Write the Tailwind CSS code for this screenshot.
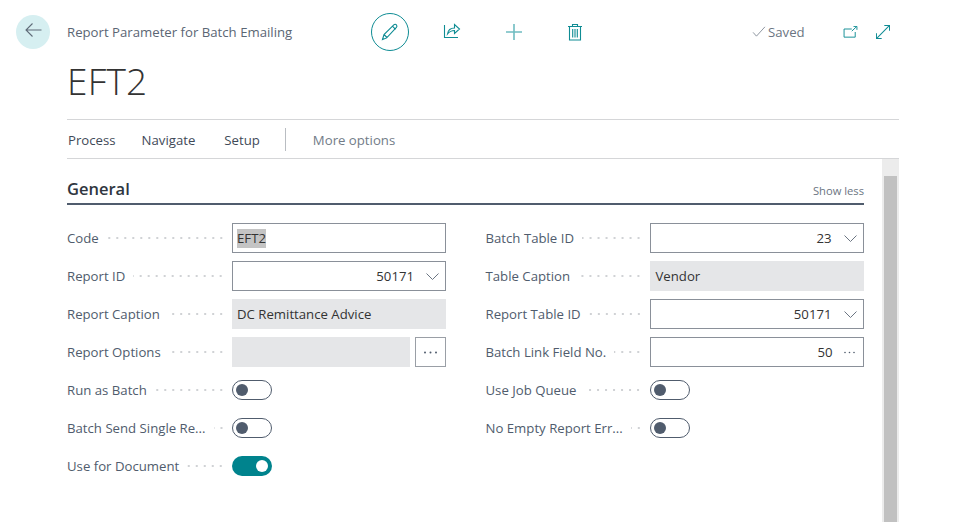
<!DOCTYPE html>
<html lang="en">
<head>
  <meta charset="UTF-8" />
  <meta name="viewport" content="width=device-width, initial-scale=1.0" />
  <title>EFT2</title>
  <script src="https://cdn.jsdelivr.net/npm/@tailwindcss/browser@4"></script>
</head>
<body class="bg-white font-['Open_Sans',sans-serif] text-[13.2px] text-[#505c6d] overflow-hidden">

<div class="relative w-[964px] h-[522px] overflow-hidden">

  <!-- Header -->
  <div class="flex pl-[16px] pt-[15px] h-[119px]">
    <button class="w-[34px] h-[34px] rounded-full bg-[#d6eff1] flex items-center justify-center">
      <svg class="-mt-[4px]" width="17" height="14" viewBox="0 0 17 14" fill="none" stroke="#5f6b78" stroke-width="1.1"><path d="M16.500 7H1M7.500.5 1 7l6.500 6.500"/></svg>
    </button>
    <div class="ml-[17px] w-[832px]">
      <div class="flex items-center h-[34px]">
        <div class="w-[304px] pt-[2px] text-[#5b6674]">Report Parameter for Batch Emailing</div>
        <div class="w-[38px] h-[38px] rounded-full border border-[#0f8c94] flex items-center justify-center">
          <svg width="18" height="18" viewBox="0 0 18 18" fill="none" stroke="#0f8c94" stroke-width="1.1"><path d="M1.5 16.5 3 11.5 12.8 1.8c.8-.8 1.9-.8 2.6 0s.7 1.8 0 2.5L5.7 14.9zM3 11.5l3 3M11.4 3.2l3.2 3.2"/></svg>
        </div>
        <svg class="ml-[34px] -mt-[4px]" width="18" height="18" viewBox="0 0 18 18" fill="none" stroke="#0f8c94" stroke-width="1.1"><path d="M1.5 4v12.5h13.5M4.5 13c.6-4 3.600-6 7-6V3.500L16.500 8l-5 4.500V9.500c-3 0-5 1-7 3.500z"/></svg>
        <svg class="ml-[44px]" width="18" height="18" viewBox="0 0 18 18" fill="none" stroke="#6fbcc1" stroke-width="1.6"><path d="M9 1v16M1 9h16"/></svg>
        <svg class="ml-[44px]" width="16" height="18" viewBox="0 0 16 18" fill="none" stroke="#0f8c94" stroke-width="1.1"><path d="M1 3.500h14M5.500 3.500V1.500h5v2M2.500 3.500v13.500h11V3.500M5.700 6v8.500M8 6v8.500M10.300 6v8.500"/></svg>
        <svg class="ml-[169px] -mt-[1px]" width="14" height="11" viewBox="0 0 15 13" fill="none" stroke="#7a8490" stroke-width="1"><path d="M.5 7.500 4.500 12 14.500 1"/></svg>
        <span class="ml-[2px] pt-[2px] text-[#6b7582]">Saved</span>
        <svg class="ml-[38px] -mt-[1px]" width="15" height="12" viewBox="0 0 16 14" fill="none" stroke="#0f8c94" stroke-width="1.1"><path d="M9.500 3.500H.5v9.500h13V7M9.500 6 15 .8M11.500.5H15.500V4.500"/></svg>
        <svg class="ml-[18px]" width="14" height="14" viewBox="0 0 16 16" fill="none" stroke="#0f8c94" stroke-width="1.2"><path d="M.8 15.200 15.200.8M9.500.5h6v6M.5 9.500v6h6"/></svg>
      </div>
      <h1 class="text-[37px] leading-[48px] font-light text-[#333] mt-[8px] tracking-[.2px]">EFT2</h1>
    </div>
  </div>

  <!-- Action bar -->
  <div class="mx-[67px] w-[832px] h-[40px] pt-[4px] border-y border-[#d5d6d8] flex items-center text-[#3f4a58]">
    <span class="ml-[1px]">Process</span>
    <span class="ml-[26px]">Navigate</span>
    <span class="ml-[29px]">Setup</span>
    <span class="ml-[25px] -mt-[4px] w-px h-[23px] bg-[#b9bdc2]"></span>
    <span class="ml-[27px] text-[#727c88]">More options</span>
  </div>

  <!-- Section -->
  <div class="ml-[67px] w-[797px]">
    <div class="flex items-end justify-between h-[39px] pb-[5px] border-b-2 border-[#505c6d] box-content">
      <span class="text-[16.500px] font-semibold text-[#2f3640] leading-[22px] -mb-[2px]">General</span>
      <span class="text-[11.200px] text-[#6b7582] -mb-[2px]">Show less</span>
    </div>

    <div class="grid grid-cols-2 gap-x-[40px] mt-[18px]">
      <!-- left column -->
      <div class="flex flex-col gap-[8px] w-[379px]">
        <div class="flex items-center h-[30px]">
          <span class="shrink-0 pt-[2px]">Code</span>
          <span class="flex-1 ml-[8px] mr-[7px] h-[4px] bg-[radial-gradient(circle,#d0d2d5_1px,transparent_1px)] bg-[length:8px_4px] bg-right"></span>
          <div class="w-[214px] h-[30px] border border-[#8a9099] flex items-center px-[4px] text-[#333]"><span class="bg-[#c4c4c4] leading-[19px]">EFT2</span></div>
        </div>
        <div class="flex items-center h-[30px]">
          <span class="shrink-0 pt-[2px]">Report ID</span>
          <span class="flex-1 ml-[8px] mr-[7px] h-[4px] bg-[radial-gradient(circle,#d0d2d5_1px,transparent_1px)] bg-[length:8px_4px] bg-right"></span>
          <div class="w-[214px] h-[30px] border border-[#8a9099] flex items-center justify-end text-[#333]">
            <span class="pt-[2px]">50171</span>
            <svg class="ml-[12px] mr-[6px]" width="13" height="7" viewBox="0 0 13 7" fill="none" stroke="#6b7582"><path d="M.5.500 6.500 6.500 12.500.5"/></svg>
          </div>
        </div>
        <div class="flex items-center h-[30px]">
          <span class="shrink-0 pt-[2px]">Report Caption</span>
          <span class="flex-1 ml-[8px] mr-[7px] h-[4px] bg-[radial-gradient(circle,#d0d2d5_1px,transparent_1px)] bg-[length:8px_4px] bg-right"></span>
          <div class="w-[214px] h-[30px] pt-[2px] bg-[#e5e6e8] flex items-center px-[5px] text-[#333]">DC Remittance Advice</div>
        </div>
        <div class="flex items-center h-[30px]">
          <span class="shrink-0 pt-[2px]">Report Options</span>
          <span class="flex-1 ml-[8px] mr-[7px] h-[4px] bg-[radial-gradient(circle,#d0d2d5_1px,transparent_1px)] bg-[length:8px_4px] bg-right"></span>
          <div class="w-[178px] h-[30px] bg-[#e5e6e8]"></div>
          <div class="ml-[5px] w-[31px] h-[30px] border border-[#9a9fa6] flex items-center justify-center">
            <svg width="15" height="3" viewBox="0 0 15 3" fill="#505c6d"><circle cx="2" cy="1.500" r="1"/><circle cx="7.500" cy="1.500" r="1"/><circle cx="13" cy="1.500" r="1"/></svg>
          </div>
        </div>
        <div class="flex items-center h-[30px]">
          <span class="shrink-0 pt-[2px]">Run as Batch</span>
          <span class="flex-1 ml-[8px] mr-[7px] h-[4px] bg-[radial-gradient(circle,#d0d2d5_1px,transparent_1px)] bg-[length:8px_4px] bg-right"></span>
          <div class="w-[214px]"><div class="w-[40px] h-[20px] rounded-full border border-[#505c6d] flex items-center pl-[3px]"><span class="w-[12px] h-[12px] rounded-full bg-[#505c6d]"></span></div></div>
        </div>
        <div class="flex items-center h-[30px]">
          <span class="shrink-0 pt-[2px]">Batch Send Single Re...</span>
          <span class="flex-1 ml-[8px] mr-[7px] h-[4px] bg-[radial-gradient(circle,#d0d2d5_1px,transparent_1px)] bg-[length:8px_4px] bg-right"></span>
          <div class="w-[214px]"><div class="w-[40px] h-[20px] rounded-full border border-[#505c6d] flex items-center pl-[3px]"><span class="w-[12px] h-[12px] rounded-full bg-[#505c6d]"></span></div></div>
        </div>
        <div class="flex items-center h-[30px]">
          <span class="shrink-0 pt-[2px]">Use for Document</span>
          <span class="flex-1 ml-[8px] mr-[7px] h-[4px] bg-[radial-gradient(circle,#d0d2d5_1px,transparent_1px)] bg-[length:8px_4px] bg-right"></span>
          <div class="w-[214px]"><div class="w-[40px] h-[20px] rounded-full bg-[#00838d] flex items-center justify-end pr-[4px]"><span class="w-[12px] h-[12px] rounded-full bg-white"></span></div></div>
        </div>
      </div>

      <!-- right column -->
      <div class="flex flex-col gap-[8px] w-[378px]">
        <div class="flex items-center h-[30px]">
          <span class="shrink-0 pt-[2px]">Batch Table ID</span>
          <span class="flex-1 ml-[8px] mr-[7px] h-[4px] bg-[radial-gradient(circle,#d0d2d5_1px,transparent_1px)] bg-[length:8px_4px] bg-right"></span>
          <div class="w-[214px] h-[30px] border border-[#8a9099] flex items-center justify-end text-[#333]">
            <span class="pt-[2px]">23</span>
            <svg class="ml-[12px] mr-[6px]" width="13" height="7" viewBox="0 0 13 7" fill="none" stroke="#6b7582"><path d="M.5.500 6.500 6.500 12.500.5"/></svg>
          </div>
        </div>
        <div class="flex items-center h-[30px]">
          <span class="shrink-0 pt-[2px]">Table Caption</span>
          <span class="flex-1 ml-[8px] mr-[7px] h-[4px] bg-[radial-gradient(circle,#d0d2d5_1px,transparent_1px)] bg-[length:8px_4px] bg-right"></span>
          <div class="w-[214px] h-[30px] pt-[2px] bg-[#e5e6e8] flex items-center px-[5px] text-[#333]"><span class="ml-[1px]">Vendor</span></div>
        </div>
        <div class="flex items-center h-[30px]">
          <span class="shrink-0 pt-[2px]">Report Table ID</span>
          <span class="flex-1 ml-[8px] mr-[7px] h-[4px] bg-[radial-gradient(circle,#d0d2d5_1px,transparent_1px)] bg-[length:8px_4px] bg-right"></span>
          <div class="w-[214px] h-[30px] border border-[#8a9099] flex items-center justify-end text-[#333]">
            <span class="pt-[2px]">50171</span>
            <svg class="ml-[12px] mr-[6px]" width="13" height="7" viewBox="0 0 13 7" fill="none" stroke="#6b7582"><path d="M.5.500 6.500 6.500 12.500.5"/></svg>
          </div>
        </div>
        <div class="flex items-center h-[30px]">
          <span class="shrink-0 pt-[2px]">Batch Link Field No.</span>
          <span class="flex-1 ml-[8px] mr-[7px] h-[4px] bg-[radial-gradient(circle,#d0d2d5_1px,transparent_1px)] bg-[length:8px_4px] bg-right"></span>
          <div class="w-[214px] h-[30px] border border-[#8a9099] flex items-center justify-end text-[#333]">
            <span class="pt-[2px]">50</span>
            <svg class="ml-[10px] mr-[7px]" width="13" height="3" viewBox="0 0 13 3" fill="#505c6d"><circle cx="2" cy="1.500" r=".8"/><circle cx="6.500" cy="1.500" r=".8"/><circle cx="11" cy="1.500" r=".8"/></svg>
          </div>
        </div>
        <div class="flex items-center h-[30px]">
          <span class="shrink-0 pt-[2px]">Use Job Queue</span>
          <span class="flex-1 ml-[8px] mr-[7px] h-[4px] bg-[radial-gradient(circle,#d0d2d5_1px,transparent_1px)] bg-[length:8px_4px] bg-right"></span>
          <div class="w-[214px]"><div class="w-[40px] h-[20px] rounded-full border border-[#505c6d] flex items-center pl-[3px]"><span class="w-[12px] h-[12px] rounded-full bg-[#505c6d]"></span></div></div>
        </div>
        <div class="flex items-center h-[30px]">
          <span class="shrink-0 pt-[2px]">No Empty Report Err...</span>
          <span class="flex-1 ml-[8px] mr-[7px] h-[4px] bg-[radial-gradient(circle,#d0d2d5_1px,transparent_1px)] bg-[length:8px_4px] bg-right"></span>
          <div class="w-[214px]"><div class="w-[40px] h-[20px] rounded-full border border-[#505c6d] flex items-center pl-[3px]"><span class="w-[12px] h-[12px] rounded-full bg-[#505c6d]"></span></div></div>
        </div>
      </div>
    </div>
  </div>

  <!-- Scrollbar -->
  <div class="absolute left-[882px] top-[159px] bottom-0 w-[17px] bg-[#ececec] px-[2px] pt-[17px]">
    <div class="h-full bg-[#c1c1c1]"></div>
  </div>
</div>

</body>
</html>
